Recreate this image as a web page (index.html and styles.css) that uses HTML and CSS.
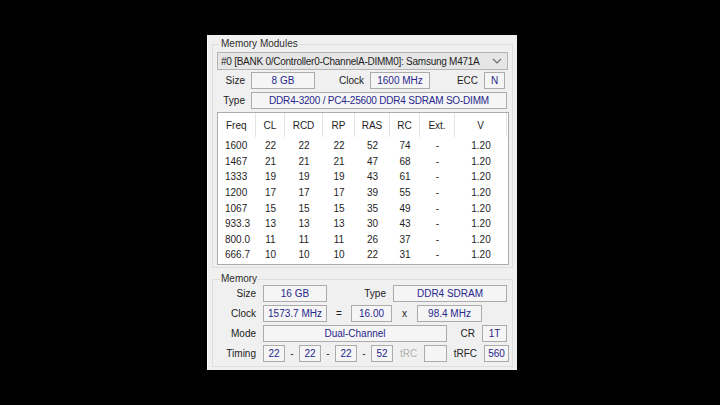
FILE: index.html
```html
<!DOCTYPE html>
<html>
<head>
<meta charset="utf-8">
<link rel="stylesheet" href="styles.css">
</head>
<body>
<div class="stage">
  <div class="win">
    <div class="group g1">
      <span class="legend">Memory Modules</span>
      <div class="combo">
        <span class="combo-text">#0 [BANK 0/Controller0-ChannelA-DIMM0]: Samsung M471A</span>
        <svg class="chev" width="10" height="6" viewBox="0 0 10 6"><path d="M1 1 L5 5 L9 1" fill="none" stroke="#6a6a6a" stroke-width="1.1"/></svg>
      </div>
      <div class="row r-size">
        <span class="lbl w28">Size</span>
        <span class="box w64">8 GB</span>
        <span class="lbl w49">Clock</span>
        <span class="box w60">1600 MHz</span>
        <span class="lbl w48">ECC</span>
        <span class="box w21">N</span>
      </div>
      <div class="row r-type">
        <span class="lbl w28">Type</span>
        <span class="box w256">DDR4-3200 / PC4-25600 DDR4 SDRAM SO-DIMM</span>
      </div>
      <div class="table">
        <div class="thead">
          <span class="c left">Freq</span><span class="c">CL</span><span class="c">RCD</span><span class="c">RP</span><span class="c">RAS</span><span class="c">RC</span><span class="c">Ext.</span><span class="c last">V</span>
        </div>
        <div class="tr"><span class="c left">1600</span><span class="c">22</span><span class="c">22</span><span class="c">22</span><span class="c">52</span><span class="c">74</span><span class="c">-</span><span class="c">1.20</span></div>
        <div class="tr"><span class="c left">1467</span><span class="c">21</span><span class="c">21</span><span class="c">21</span><span class="c">47</span><span class="c">68</span><span class="c">-</span><span class="c">1.20</span></div>
        <div class="tr"><span class="c left">1333</span><span class="c">19</span><span class="c">19</span><span class="c">19</span><span class="c">43</span><span class="c">61</span><span class="c">-</span><span class="c">1.20</span></div>
        <div class="tr"><span class="c left">1200</span><span class="c">17</span><span class="c">17</span><span class="c">17</span><span class="c">39</span><span class="c">55</span><span class="c">-</span><span class="c">1.20</span></div>
        <div class="tr"><span class="c left">1067</span><span class="c">15</span><span class="c">15</span><span class="c">15</span><span class="c">35</span><span class="c">49</span><span class="c">-</span><span class="c">1.20</span></div>
        <div class="tr"><span class="c left">933.3</span><span class="c">13</span><span class="c">13</span><span class="c">13</span><span class="c">30</span><span class="c">43</span><span class="c">-</span><span class="c">1.20</span></div>
        <div class="tr"><span class="c left">800.0</span><span class="c">11</span><span class="c">11</span><span class="c">11</span><span class="c">26</span><span class="c">37</span><span class="c">-</span><span class="c">1.20</span></div>
        <div class="tr"><span class="c left">666.7</span><span class="c">10</span><span class="c">10</span><span class="c">10</span><span class="c">22</span><span class="c">31</span><span class="c">-</span><span class="c">1.20</span></div>
      </div>
    </div>

    <div class="group g2">
      <span class="legend">Memory</span>
      <div class="row">
        <span class="lbl w43">Size</span>
        <span class="box w64">16 GB</span>
        <span class="lbl w59">Type</span>
        <span class="box w114">DDR4 SDRAM</span>
      </div>
      <div class="row">
        <span class="lbl w43">Clock</span>
        <span class="box w64">1573.7 MHz</span>
        <span class="sym w24">=</span>
        <span class="box w41 ml0">16.00</span>
        <span class="sym w25">x</span>
        <span class="box w65 ml0">98.4 MHz</span>
      </div>
      <div class="row">
        <span class="lbl w43">Mode</span>
        <span class="box w184">Dual-Channel</span>
        <span class="lbl w28">CR</span>
        <span class="box w25">1T</span>
      </div>
      <div class="row">
        <span class="lbl w43">Timing</span>
        <span class="box w22">22</span>
        <span class="sym w14">-</span>
        <span class="box w22 ml0">22</span>
        <span class="sym w14">-</span>
        <span class="box w22 ml0">22</span>
        <span class="sym w14">-</span>
        <span class="box w22 ml0">52</span>
        <span class="sym w31 dim">tRC</span>
        <span class="box w23 ml0"></span>
        <span class="lbl w30">tRFC</span>
        <span class="box w25">560</span>
      </div>
    </div>
  </div>
</div>
</body>
</html>
```

FILE: styles.css
```css
html, body {
  margin: 0;
  padding: 0;
  background: #000;
}
body {
  width: 720px;
  height: 405px;
  overflow: hidden;
  font-family: "Liberation Sans", Arial, sans-serif;
  font-size: 10px;
  color: #1e1e1e;
}
.stage {
  padding: 35px 0 0 207px;
}
.win {
  width: 310px;
  height: 335px;
  box-sizing: border-box;
  background: #f0f0f0;
  border-left: 1px solid #fbfbfb;
  padding: 9px 0 0 4px;
  display: flex;
  flex-direction: column;
}
.group {
  position: relative;
  box-sizing: border-box;
  width: 301px;
  border: 1px solid #dedede;
  display: flex;
  flex-direction: column;
}
.legend {
  position: absolute;
  top: -7px;
  left: 7px;
  padding: 0 1px;
  background: #f0f0f0;
  line-height: 12px;
  color: #2e2e2e;
}
.g1 {
  height: 224px;
  padding: 7px 0 0 4px;
}
.g2 {
  margin-top: 11px;
  height: 88px;
  padding: 5px 0 0 0;
  gap: 3px;
}
.combo {
  box-sizing: border-box;
  width: 291px;
  height: 18px;
  border: 1px solid #b4b4b4;
  background: #e6e6e6;
  display: flex;
  align-items: center;
  justify-content: space-between;
  padding: 0 5px 0 3px;
  color: #1e1e1e;
  letter-spacing: -0.25px;
  white-space: nowrap;
}
.chev { flex: none; }
.row {
  display: flex;
  align-items: center;
  height: 17px;
}
.r-size { margin-top: 2px; }
.r-type { margin-top: 3px; }
.lbl {
  text-align: right;
  color: #222;
  flex: none;
}
.sym {
  text-align: center;
  flex: none;
  color: #222;
}
.dim { color: #b0b0b0; }
.box {
  box-sizing: border-box;
  height: 17px;
  margin-left: 6px;
  border: 1px solid #ababab;
  background: #f5f5f5;
  color: #27278c;
  display: flex;
  align-items: center;
  justify-content: center;
  flex: none;
  white-space: nowrap;
}
.g2 .box { margin-left: 7px; }
.g2 .box.ml0 { margin-left: 0; }
.g2 .lbl.w43 { width: 43px; }
.w14 { width: 14px; }
.w21 { width: 21px; }
.w22 { width: 22px; }
.w23 { width: 23px; }
.w24 { width: 24px; }
.w25 { width: 25px; }
.w28 { width: 28px; }
.w30 { width: 30px; }
.w31 { width: 31px; }
.w41 { width: 41px; }
.w43 { width: 43px; }
.w48 { width: 48px; }
.w49 { width: 49px; }
.w59 { width: 59px; }
.w60 { width: 60px; }
.w64 { width: 64px; }
.w65 { width: 65px; }
.w114 { width: 114px; }
.w184 { width: 184px; }
.w256 { width: 256px; }
.g1 .box.w256 { letter-spacing: -0.2px; }
.table {
  margin-top: 3px;
  box-sizing: border-box;
  width: 292px;
  height: 153px;
  border: 1px solid #acacac;
  background: #fff;
  color: #1e1e1e;
}
.thead, .tr {
  display: grid;
  grid-template-columns: 38px 29px 38px 32px 35px 30px 35px 52px;
}
.thead {
  height: 24px;
}
.thead .c {
  border-right: 1px solid #e4e4e4;
}
.tr {
  height: 15.6px;
}
.tr:first-of-type { margin-top: 0; }
.thead + .tr { margin-top: 1px; }
.c {
  display: flex;
  align-items: center;
  justify-content: center;
}
.c.left {
  justify-content: flex-start;
  padding-left: 8px;
}
.tr .c.left { padding-left: 7px; }
```
